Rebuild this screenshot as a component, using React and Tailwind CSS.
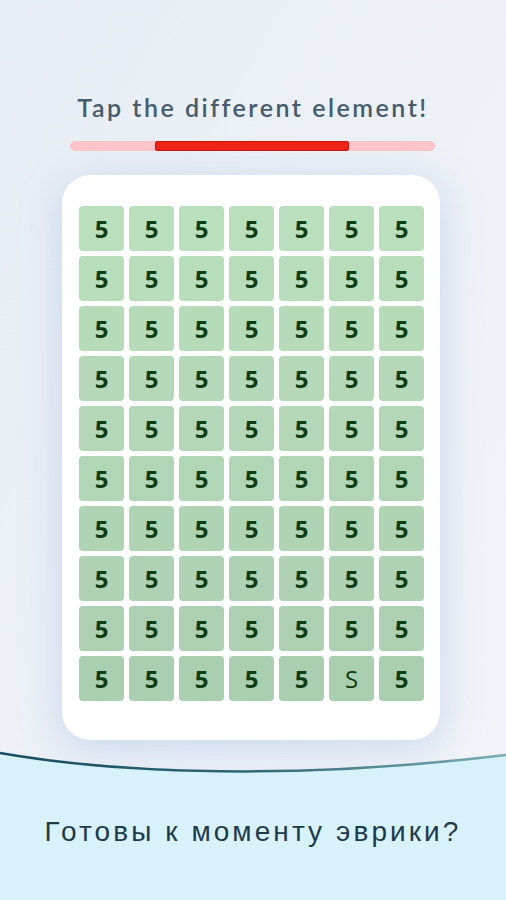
import React from "react";

const ROWS = 10;
const COLS = 7;
// odd one out sits in the last row, sixth column
const ODD = { row: 9, col: 5 };

function cellColor(row) {
  // cells get a little darker towards the bottom of the board
  const t = row / (ROWS - 1);
  const r = Math.round(186 - 16 * t);
  const g = Math.round(223 - 17 * t);
  const b = Math.round(188 - 12 * t);
  return `rgb(${r}, ${g}, ${b})`;
}

function Board() {
  const cells = [];
  for (let row = 0; row < ROWS; row++) {
    for (let col = 0; col < COLS; col++) {
      const isOdd = row === ODD.row && col === ODD.col;
      cells.push(
        <div
          key={`${row}-${col}`}
          className="w-[45px] h-[45px] rounded-[4px] flex items-center justify-center text-[#0d3d12]"
          style={{ backgroundColor: cellColor(row) }}
        >
          {isOdd ? (
            <span className="text-[24px] font-normal leading-none font-['Open_Sans',sans-serif]">S</span>
          ) : (
            <span className="text-[24px] font-bold leading-none font-['Open_Sans',sans-serif]">5</span>
          )}
        </div>
      );
    }
  }

  return (
    <div className="w-[378px] h-[565px] bg-white rounded-[28px] pl-[17px] pt-[31px] shadow-[0_8px_40px_rgba(130,165,220,0.35)]">
      <div className="grid grid-cols-[repeat(7,45px)] gap-[5px]">{cells}</div>
    </div>
  );
}

export default function App() {
  return (
    <div className="w-[506px] h-[900px] overflow-hidden flex flex-col bg-gradient-to-br from-[#e7edf5] via-[#edf1f6] to-[#f2f4f8]">
      <div className="flex flex-col pt-[92px]">
        <h1 className="self-center text-[25px] leading-[30px] font-semibold tracking-[0.1em] text-[#465b6b] font-['Lato',sans-serif]">
          Tap the different element!
        </h1>
        <div className="ml-[70px] mt-[19px] w-[365px] h-[10px] rounded-full bg-[#ffc5ca] pl-[85px]">
          <div className="w-[194px] h-[10px] rounded-[2px] bg-[#ee2416] border border-[#c8150c]" />
        </div>
        <div className="ml-[62px] mt-[24px]">
          <Board />
        </div>
      </div>

      <div className="relative flex-1 mt-[10px]">
        <svg className="absolute left-0 top-0" width="506" height="40" viewBox="0 0 506 40">
          <defs>
            <linearGradient id="curveStroke" x1="0" y1="0" x2="1" y2="0">
              <stop offset="0" stopColor="#174d5e" />
              <stop offset="0.5" stopColor="#2f6775" />
              <stop offset="1" stopColor="#7aaeb3" />
            </linearGradient>
          </defs>
          <path d="M0 3 C 120 24, 300 30, 506 5 L 506 40 L 0 40 Z" fill="#d7f2fb" />
          <path d="M0 3 C 120 24, 300 30, 506 5" fill="none" stroke="url(#curveStroke)" strokeWidth="2.5" />
        </svg>
        <div className="absolute left-0 right-0 top-[40px] bottom-0 bg-[#d7f2fb]" />
        <div className="relative pt-[65px] flex justify-center">
          <p className="text-[28px] leading-[34px] tracking-[0.11em] text-[#1d3a4b] font-['Liberation_Sans',sans-serif]">
            Готовы к моменту эврики?
          </p>
        </div>
      </div>
    </div>
  );
}
